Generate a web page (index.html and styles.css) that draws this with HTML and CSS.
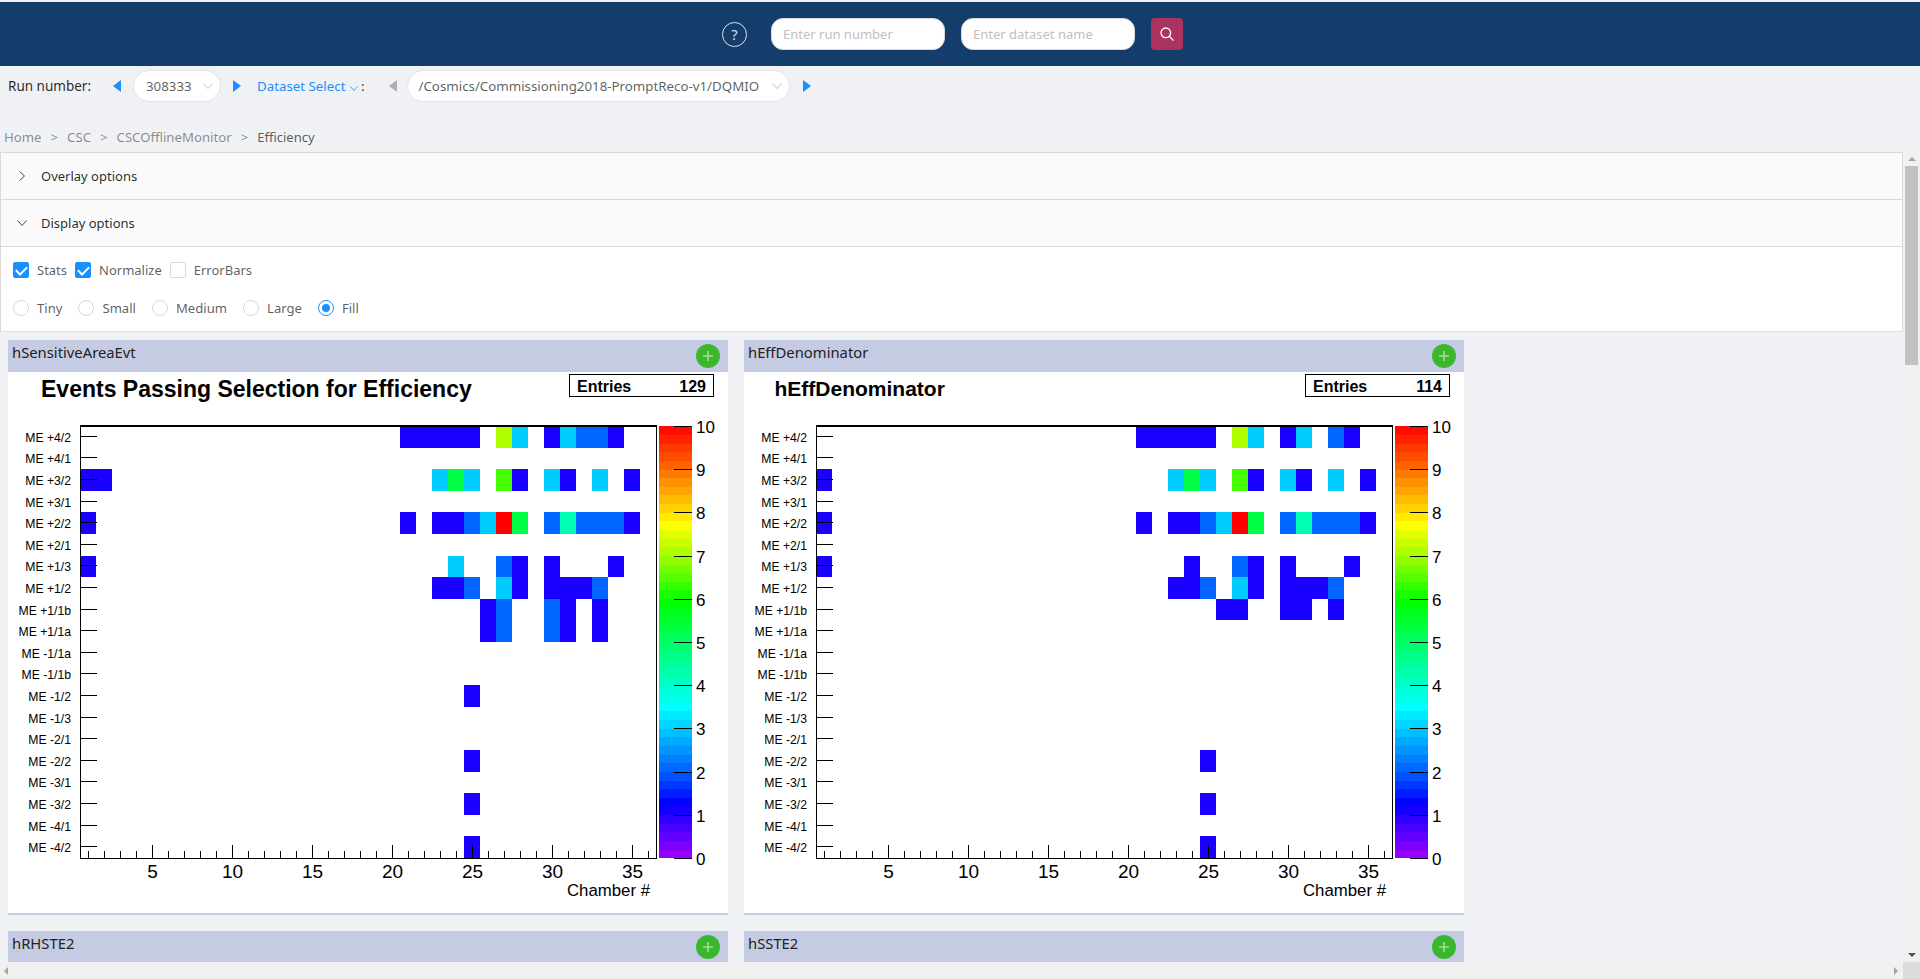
FILE: index.html
```html
<!DOCTYPE html>
<html lang="en">

<head>
    <meta charset="UTF-8">
    <meta name="viewport" content="width=device-width, initial-scale=1.0">
    <title>DQM GUI</title>
    <link rel="stylesheet" href="styles.css">
</head>

<body>
    <div class="page">
        <header class="topbar">
            <span class="help">?</span>
            <input class="search-input" type="text" placeholder="Enter run number">
            <input class="search-input" type="text" placeholder="Enter dataset name">
            <button class="search-btn" aria-label="Search">
                <svg width="16" height="16" viewBox="0 0 16 16" fill="none" stroke="#fff" stroke-width="1.3">
                    <circle cx="6.8" cy="6.8" r="4.8"></circle>
                    <path d="M10.3 10.3L14.6 14.6"></path>
                </svg>
            </button>
        </header>

        <div class="run-row">
            <span class="run-label">Run number:</span>
            <svg class="arrow arrow-prev-run" viewBox="0 0 8 12"><polygon points="8,0 8,12 0,6"></polygon></svg>
            <div class="select select-run">
                <span>308333</span>
                <svg class="chevron" viewBox="0 0 10 6"><path d="M0.5 0.5L5 5.5L9.5 0.5"></path></svg>
            </div>
            <svg class="arrow arrow-next-run" viewBox="0 0 8 12"><polygon points="0,0 0,12 8,6"></polygon></svg>
            <span class="dataset-link">Dataset Select
                <svg class="chevron chevron-blue" viewBox="0 0 10 6"><path d="M0.5 0.5L5 5.5L9.5 0.5"></path></svg>
            </span>
            <span class="colon">:</span>
            <svg class="arrow arrow-off" viewBox="0 0 8 12"><polygon points="8,0 8,12 0,6"></polygon></svg>
            <div class="select select-dataset">
                <span>/Cosmics/Commissioning2018-PromptReco-v1/DQMIO</span>
                <svg class="chevron" viewBox="0 0 10 6"><path d="M0.5 0.5L5 5.5L9.5 0.5"></path></svg>
            </div>
            <svg class="arrow arrow-next-set" viewBox="0 0 8 12"><polygon points="0,0 0,12 8,6"></polygon></svg>
        </div>

        <nav class="breadcrumb">
            <span>Home</span><i>&gt;</i><span>CSC</span><i>&gt;</i><span>CSCOfflineMonitor</span><i>&gt;</i><b>Efficiency</b>
        </nav>

        <div class="scroll-area">
            <main class="content">
                <section class="collapse">
                    <div class="collapse-head">
                        <svg class="caret" viewBox="0 0 6 10"><path d="M0.5 0.5L5.5 5L0.5 9.5"></path></svg>
                        Overlay options
                    </div>
                    <div class="collapse-head">
                        <svg class="caret caret-open" viewBox="0 0 10 6"><path d="M0.5 0.5L5 5.5L9.5 0.5"></path></svg>
                        Display options
                    </div>
                    <div class="collapse-body">
                        <div class="option-row">
                            <label class="option"><span class="checkbox checked"></span>Stats</label>
                            <label class="option"><span class="checkbox checked"></span>Normalize</label>
                            <label class="option"><span class="checkbox"></span>ErrorBars</label>
                        </div>
                        <div class="option-row radios">
                            <label class="option"><span class="radio"></span>Tiny</label>
                            <label class="option"><span class="radio"></span>Small</label>
                            <label class="option"><span class="radio"></span>Medium</label>
                            <label class="option"><span class="radio"></span>Large</label>
                            <label class="option"><span class="radio checked"></span>Fill</label>
                        </div>
                    </div>
                </section>

                <section class="plots">
                    <article class="plot-card">
                        <div class="plot-head">hSensitiveAreaEvt<span class="add-btn"><svg viewBox="0 0 12 12"><path d="M6 1V11M1 6H11"></path></svg></span></div>
                        <svg class="plot" id="plotArea" width="720" height="541"></svg>
                    </article>
                    <article class="plot-card">
                        <div class="plot-head">hEffDenominator<span class="add-btn"><svg viewBox="0 0 12 12"><path d="M6 1V11M1 6H11"></path></svg></span></div>
                        <svg class="plot" id="plotDenom" width="720" height="541"></svg>
                    </article>
                    <article class="plot-card">
                        <div class="plot-head">hRHSTE2<span class="add-btn"><svg viewBox="0 0 12 12"><path d="M6 1V11M1 6H11"></path></svg></span></div>
                    </article>
                    <article class="plot-card">
                        <div class="plot-head">hSSTE2<span class="add-btn"><svg viewBox="0 0 12 12"><path d="M6 1V11M1 6H11"></path></svg></span></div>
                    </article>
                </section>
            </main>

            <div class="vscroll">
                <span class="tri tri-up"></span>
                <div class="vthumb"></div>
                <span class="tri tri-down"></span>
            </div>
            <div class="hscroll">
                <span class="tri tri-left"></span>
                <span class="tri tri-right"></span>
            </div>
            <div class="corner"></div>
        </div>
    </div>

    <script src="script.js"></script>
</body>

</html>
```

FILE: styles.css
```css
* {
    box-sizing: border-box;
}

html,
body {
    margin: 0;
    height: 100%;
    overflow: hidden;
}

body {
    font-family: "Noto Sans", "Open Sans", sans-serif;
    font-size: 13px;
    color: rgba(0, 0, 0, 0.65);
    background-color: #f0f1f5;
}

.page {
    display: flex;
    flex-direction: column;
    height: 100vh;
}

/* barra superior */
.topbar {
    flex: none;
    display: flex;
    align-items: center;
    justify-content: center;
    height: 66px;
    margin-top: 0;
    padding-right: 15px;
    border-top: 2px solid #f0f1f5;
    background-color: #143d6b;
}

.help {
    display: flex;
    align-items: center;
    justify-content: center;
    width: 25px;
    height: 25px;
    margin-right: 24px;
    border: 1px solid #d5e3ef;
    border-radius: 50%;
    color: #d5e3ef;
    font-size: 14px;
}

.search-input {
    width: 174px;
    height: 32px;
    margin-right: 16px;
    padding: 0 11px;
    border: 1px solid #d9d9d9;
    border-radius: 12px;
    background-color: #fff;
    font-family: inherit;
    font-size: 13px;
    outline: none;
}

.search-input::placeholder {
    color: #bfbfbf;
}

.search-btn {
    display: flex;
    align-items: center;
    justify-content: center;
    width: 32px;
    height: 32px;
    padding: 0;
    border: 0;
    border-radius: 4px;
    background-color: #aa335f;
}

/* fila de run */
.run-row {
    flex: none;
    display: flex;
    align-items: center;
    height: 32px;
    margin-top: 4px;
    padding-left: 8px;
    font-size: 13.3px;
}

.run-label {
    width: 105px;
    font-size: 13.5px;
    color: rgba(0, 0, 0, 0.85);
}

.arrow {
    flex: none;
    width: 8px;
    height: 12px;
    fill: #1890ff;
}

.arrow-off {
    margin-left: 24px;
    fill: #b0b0b0;
}

.arrow-next-run {
    margin-left: 12px;
}

.arrow-next-set {
    margin-left: 13px;
}

.select {
    display: flex;
    align-items: center;
    justify-content: space-between;
    height: 32px;
    padding: 0 7px 0 12px;
    border: 1px solid #e3e4e8;
    border-radius: 16px;
    background-color: #fff;
    color: rgba(0, 0, 0, 0.65);
}

.select-run {
    width: 88px;
    margin-left: 12px;
}

.select-dataset {
    width: 383px;
    margin-left: 10px;
    padding-left: 11px;
}

.chevron {
    flex: none;
    width: 10px;
    height: 6px;
    fill: none;
    stroke: #bfbfbf;
    stroke-width: 1;
}

.chevron-blue {
    width: 8px;
    height: 5px;
    margin-left: 1px;
    stroke: #1890ff;
}

.dataset-link {
    margin-left: 16px;
    color: #1890ff;
}

.colon {
    margin-left: 3px;
    color: rgba(0, 0, 0, 0.85);
}

.breadcrumb {
    flex: none;
    display: flex;
    align-items: center;
    height: 22px;
    margin-top: 24px;
    margin-bottom: 4px;
    padding-left: 4px;
    font-size: 13.2px;
    color: rgba(0, 0, 0, 0.45);
}

.breadcrumb i {
    margin: 0 9px;
    font-style: normal;
}

.breadcrumb b {
    font-size: 13px;
    font-weight: normal;
    color: rgba(0, 0, 0, 0.65);
}

/* zona con scroll */
.scroll-area {
    flex: 1;
    min-height: 0;
    display: grid;
    grid-template-columns: 1fr 17px;
    grid-template-rows: 1fr 17px;
}

.content {
    overflow: hidden;
}

.collapse {
    border: 1px solid #d9d9d9;
    border-bottom-color: #dfdfdf;
    background-color: #fff;
}

.collapse-head {
    display: flex;
    align-items: center;
    height: 47px;
    padding-left: 18px;
    border-bottom: 1px solid #d9d9d9;
    background-color: #fafafa;
    color: rgba(0, 0, 0, 0.85);
}

.caret {
    width: 6px;
    height: 10px;
    margin-right: 16px;
    fill: none;
    stroke: #444;
    stroke-width: 1;
}

.caret-open {
    width: 10px;
    height: 6px;
    margin-left: -2px;
    margin-right: 14px;
}

.collapse-body {
    height: 84px;
    padding: 14px 12px 0;
}

.option-row {
    display: flex;
    align-items: center;
    height: 18px;
}

.radios {
    margin-top: 20px;
    font-size: 13.1px;
}

.option {
    display: flex;
    align-items: center;
    margin-right: 8px;
}

.radios .option {
    margin-right: 16px;
}

.checkbox,
.radio {
    flex: none;
    display: flex;
    align-items: center;
    justify-content: center;
    width: 16px;
    height: 16px;
    margin-right: 8px;
    border: 1px solid #d9d9d9;
    background-color: #fff;
}

.checkbox {
    border-radius: 2px;
}

.checkbox.checked {
    border-color: #1890ff;
    background-color: #1890ff;
}

.checkbox.checked::after {
    content: "";
    width: 5px;
    height: 9px;
    margin-top: -2px;
    border: solid #fff;
    border-width: 0 2px 2px 0;
    transform: rotate(45deg);
}

.radio {
    border-radius: 50%;
}

.radio.checked {
    border-color: #1890ff;
}

.radio.checked::after {
    content: "";
    width: 8px;
    height: 8px;
    border-radius: 50%;
    background-color: #1890ff;
}

/* graficos */
.plots {
    display: grid;
    grid-template-columns: 720px 720px;
    gap: 16px;
    padding: 8px 8px 0;
}

.plot-card {
    background-color: #fff;
    border-bottom: 2px solid #c5cbe3;
}

.plot-head {
    display: flex;
    justify-content: space-between;
    height: 32px;
    padding: 1px 8px 0 4px;
    background-color: #c5cbe3;
    color: #222;
    font-size: 14.8px;
    line-height: 22px;
}

.add-btn {
    display: flex;
    align-items: center;
    justify-content: center;
    width: 24px;
    height: 24px;
    margin-top: 3px;
    border-radius: 50%;
    background-color: #3cb72d;
}

.add-btn svg {
    width: 12px;
    height: 12px;
    fill: none;
    stroke: #a6dba0;
    stroke-width: 1.6;
}

.plot {
    display: block;
    background-color: #fff;
}

.plot text {
    font-family: "Liberation Sans", Arial, sans-serif;
    fill: #000;
}

.plot .cell,
.plot .line {
    shape-rendering: crispEdges;
}

.plot .line {
    stroke: #000;
    stroke-width: 1;
    fill: none;
}

.plot .top-line {
    stroke-width: 2;
}

.plot .title {
    font-weight: bold;
}

.plot .stats {
    font-size: 16px;
    font-weight: bold;
}

.plot .row-label {
    font-size: 12.2px;
    text-anchor: end;
}

.plot .axis-label {
    font-size: 19px;
    text-anchor: middle;
}

.plot .axis-title {
    font-size: 16.8px;
    text-anchor: end;
}

.plot .pal-label {
    font-size: 17px;
}

/* barras de scroll */
.vscroll {
    display: flex;
    flex-direction: column;
    align-items: center;
    background-color: #f1f1f1;
}

.vthumb {
    width: 13px;
    height: 199px;
    margin-top: 5px;
    background-color: #c1c1c1;
}

.hscroll {
    display: flex;
    align-items: center;
    justify-content: space-between;
    padding: 0 5px 0 4px;
    background-color: #f1f1f1;
}

.corner {
    background-color: #dcdcdc;
}

.tri {
    flex: none;
    width: 0;
    height: 0;
    border: 4px solid transparent;
}

.tri-up {
    margin-top: 5px;
    border-top-width: 0;
    border-bottom: 4px solid #a3a3a3;
}

.tri-down {
    margin-top: auto;
    margin-bottom: 5px;
    border-bottom-width: 0;
    border-top: 4px solid #505050;
}

.tri-left {
    border-left-width: 0;
    border-right: 4px solid #a3a3a3;
}

.tri-right {
    border-right-width: 0;
    border-left: 4px solid #a3a3a3;
}
```

FILE: script.js
```js
// Geometria comun de los dos histogramas
var LEFT = 72;
var TOP = 54;
var BIN_W = 16;
var BIN_H = 21.6;
var BOTTOM = TOP + 20 * BIN_H;
var RIGHT = LEFT + 36 * BIN_W;

var ROWS = ['ME +4/2', 'ME +4/1', 'ME +3/2', 'ME +3/1', 'ME +2/2', 'ME +2/1', 'ME +1/3', 'ME +1/2',
    'ME +1/1b', 'ME +1/1a', 'ME -1/1a', 'ME -1/1b', 'ME -1/2', 'ME -1/3', 'ME -2/1', 'ME -2/2',
    'ME -3/1', 'ME -3/2', 'ME -4/1', 'ME -4/2'];

var COLORS = {
    B: '#1a00ff',
    M: '#0066ff',
    C: '#00ccff',
    T: '#00ffb2',
    G: '#00ff44',
    H: '#44ff00',
    L: '#b0ff00',
    R: '#ff0000'
};

var HUES = [278, 248, 218, 192, 168, 144, 118, 82, 52, 26, 0];

var plots = {
    plotArea: {
        title: 'Events Passing Selection for Efficiency',
        titleX: 33,
        titleY: 25,
        titleSize: 23,
        entries: 129,
        cells: {
            0: '21B 22B 23B 24B 25B 27L 28C 30B 31C 32M 33M 34B',
            2: '1B 2B 23C 24G 25C 27H 28B 30C 31B 33C 35B',
            4: '1B 21B 23B 24B 25M 26C 27R 28G 30M 31T 32M 33M 34M 35B',
            6: '1B 24C 27M 28B 30B 34B',
            7: '23B 24B 25M 27C 28B 30B 31B 32B 33M',
            8: '26B 27M 30M 31B 33B',
            9: '26B 27M 30M 31B 33B',
            12: '25B',
            15: '25B',
            17: '25B',
            19: '25B'
        }
    },
    plotDenom: {
        title: 'hEffDenominator',
        titleX: 30.5,
        titleY: 24,
        titleSize: 21,
        entries: 114,
        cells: {
            0: '21B 22B 23B 24B 25B 27L 28C 30B 31C 33M 34B',
            2: '1B 23C 24G 25C 27H 28B 30C 31B 33C 35B',
            4: '1B 21B 23B 24B 25M 26C 27R 28G 30M 31T 32M 33M 34M 35B',
            6: '1B 24B 27M 28B 30B 34B',
            7: '23B 24B 25M 27C 28B 30B 31B 32B 33M',
            8: '26B 27B 30B 31B 33B',
            15: '25B',
            17: '25B',
            19: '25B'
        }
    }
};

function rect(x, y, w, h, color) {
    return '<rect class="cell" x="' + x + '" y="' + y + '" width="' + w + '" height="' + h + '" fill="' + color + '"></rect>';
}

function line(x1, y1, x2, y2, extra) {
    return '<line class="line ' + (extra || '') + '" x1="' + x1 + '" y1="' + y1 + '" x2="' + x2 + '" y2="' + y2 + '"></line>';
}

function text(cls, x, y, value, style) {
    return '<text class="' + cls + '" x="' + x + '" y="' + y + '"' + (style ? ' style="' + style + '"' : '') + '>' + value + '</text>';
}

function paletteColor(v) {
    var low = Math.min(Math.floor(v), 9);
    var hue = HUES[low] + (HUES[low + 1] - HUES[low]) * (v - low);
    return 'hsl(' + hue.toFixed(1) + ', 100%, 50%)';
}

function drawPlot(id, plot) {
    var out = '';

    // Celdas
    Object.keys(plot.cells).forEach(function(row) {
        plot.cells[row].split(' ').forEach(function(cell) {
            var chamber = parseInt(cell, 10);
            var color = COLORS[cell.charAt(cell.length - 1)];
            out += rect(LEFT + (chamber - 1) * BIN_W, TOP + row * BIN_H, BIN_W, BIN_H, color);
        });
    });

    // Titulo y caja de estadisticas
    out += text('title', plot.titleX, plot.titleY, plot.title, 'font-size:' + plot.titleSize + 'px');
    out += '<rect class="line" x="561.5" y="2.5" width="144" height="22"></rect>';
    out += text('stats', 569, 19.5, 'Entries');
    out += text('stats', 698, 19.5, plot.entries, 'text-anchor:end');

    // Marco
    out += line(LEFT + 0.5, TOP, LEFT + 0.5, BOTTOM);
    out += line(RIGHT + 0.5, TOP, RIGHT + 0.5, BOTTOM);
    out += line(LEFT, BOTTOM + 0.5, RIGHT + 1, BOTTOM + 0.5);
    out += line(LEFT, TOP - 0.5, RIGHT + 1, TOP - 0.5, 'top-line');

    // Eje Y
    ROWS.forEach(function(label, i) {
        var y = Math.round(TOP + (i + 0.5) * BIN_H) - 0.5;
        out += line(LEFT, y, LEFT + 17, y);
        out += text('row-label', 63, y + 5.5, label);
    });

    // Eje X
    for (var c = 1; c <= 36; c++) {
        var x = LEFT + (c - 0.5) * BIN_W + 0.5;
        out += line(x, BOTTOM, x, BOTTOM - (c % 5 === 0 ? 13 : 7));
        if (c % 5 === 0) {
            out += text('axis-label', x, 506, c);
        }
    }
    out += text('axis-title', 642, 524, 'Chamber #');

    // Paleta
    var steps = 50;
    var stepH = (BOTTOM - TOP) / steps;
    for (var s = 0; s < steps; s++) {
        out += rect(651, (BOTTOM - (s + 1) * stepH).toFixed(2), 33, (stepH + 0.3).toFixed(2), paletteColor((s + 0.5) / 5));
    }
    for (var v = 0; v <= 10; v++) {
        var py = Math.round(BOTTOM - v * (BOTTOM - TOP) / 10) + 0.5;
        out += line(666, py, 684, py);
        out += text('pal-label', 688, py + 6, v);
    }

    document.getElementById(id).innerHTML = out;
}

Object.keys(plots).forEach(function(id) {
    drawPlot(id, plots[id]);
});
```
